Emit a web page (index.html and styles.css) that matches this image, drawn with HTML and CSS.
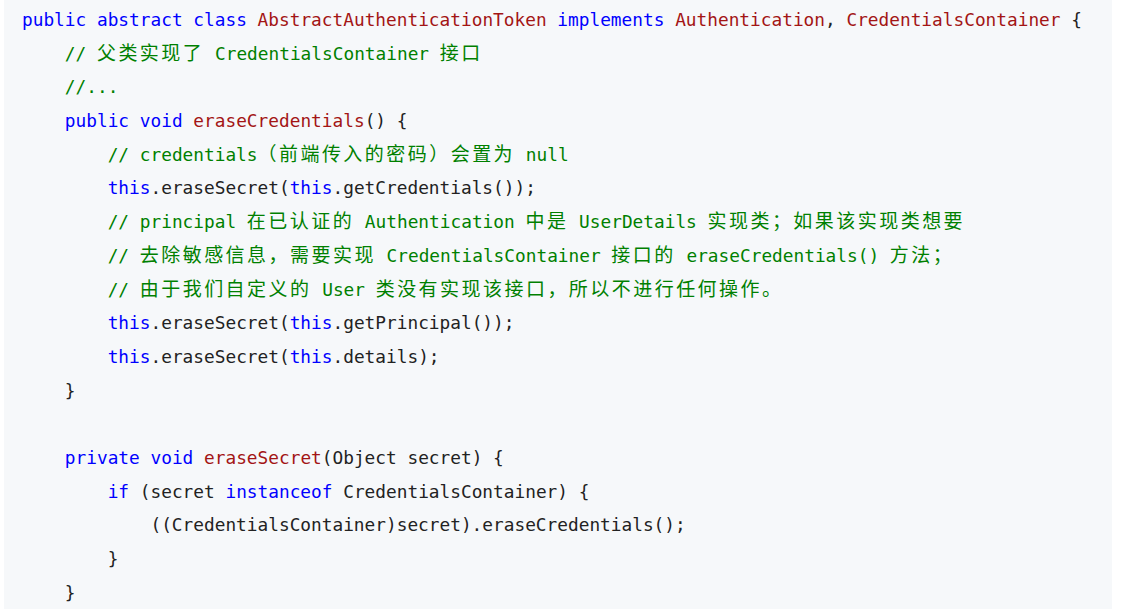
FILE: index.html
```html
<!DOCTYPE html>
<html lang="zh-CN">
<head>
<meta charset="utf-8">
<title>AbstractAuthenticationToken</title>
<link rel="stylesheet" href="styles.css">
</head>
<body>
<div class="code">
  <div class="ln"><span class="kw">public</span> <span class="kw">abstract</span> <span class="kw">class</span> <span class="ti">AbstractAuthenticationToken</span> <span class="kw">implements</span> <span class="ti">Authentication</span>, <span class="ti">CredentialsContainer</span> {</div>
  <div class="ln">    <span class="cm">// <span class="cj">父类实现了</span> CredentialsContainer <span class="cj">接口</span></span></div>
  <div class="ln">    <span class="cm">//...</span></div>
  <div class="ln">    <span class="kw">public</span> <span class="kw">void</span> <span class="ti">eraseCredentials</span>() {</div>
  <div class="ln">        <span class="cm">// credentials<span class="cj">（前端传入的密码）会置为</span> null</span></div>
  <div class="ln">        <span class="kw">this</span>.eraseSecret(<span class="kw">this</span>.getCredentials());</div>
  <div class="ln">        <span class="cm">// principal <span class="cj">在已认证的</span> Authentication <span class="cj">中是</span> UserDetails <span class="cj">实现类；如果该实现类想要</span></span></div>
  <div class="ln">        <span class="cm">// <span class="cj">去除敏感信息，需要实现</span> CredentialsContainer <span class="cj">接口的</span> eraseCredentials() <span class="cj">方法；</span></span></div>
  <div class="ln">        <span class="cm">// <span class="cj">由于我们自定义的</span> User <span class="cj">类没有实现该接口，所以不进行任何操作。</span></span></div>
  <div class="ln">        <span class="kw">this</span>.eraseSecret(<span class="kw">this</span>.getPrincipal());</div>
  <div class="ln">        <span class="kw">this</span>.eraseSecret(<span class="kw">this</span>.details);</div>
  <div class="ln">    }</div>
  <div class="ln"> </div>
  <div class="ln">    <span class="kw">private</span> <span class="kw">void</span> <span class="ti">eraseSecret</span>(Object secret) {</div>
  <div class="ln">        <span class="kw">if</span> (secret <span class="kw">instanceof</span> CredentialsContainer) {</div>
  <div class="ln">            ((CredentialsContainer)secret).eraseCredentials();</div>
  <div class="ln">        }</div>
  <div class="ln">    }</div>
</div>
</body>
</html>
```

FILE: styles.css
```css
html, body {
  margin: 0;
  padding: 0;
  background: #ffffff;
}

body {
  height: 609px;
  overflow: hidden;
}

.code {
  margin: 0 0 0 4px;
  width: 1108px;
  height: 609px;
  box-sizing: border-box;
  padding: 3px 0 0 18px;
  background: #f6f8fa;
  font-family: "DejaVu Sans Mono", "Noto Sans CJK SC", monospace;
  font-size: 17.8px;
  line-height: 33.7px;
  color: #222222;
  overflow: hidden;
}

.ln {
  height: 33.7px;
  line-height: 33.7px;
  white-space: pre;
}

.kw {
  color: #0000ff;
}

.ti {
  color: #a31515;
}

.cm {
  color: #008000;
}

.cj {
  font-family: "Noto Sans CJK SC", sans-serif;
  font-size: 19px;
  line-height: 0;
  letter-spacing: 2.46px;
}
```
